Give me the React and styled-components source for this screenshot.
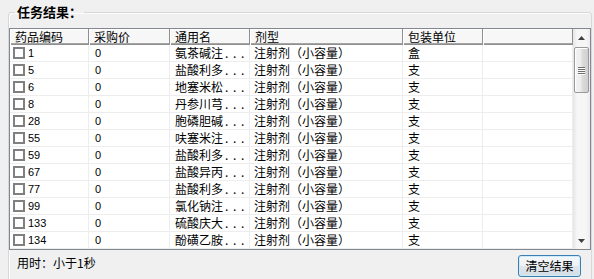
import React from "react";
import styled, { createGlobalStyle } from "styled-components";

const Global = createGlobalStyle`
  html, body { margin: 0; padding: 0; background: #f0f0f0; overflow: hidden; }
  body { font-family: "Noto Sans CJK SC", "Liberation Sans", sans-serif; font-size: 12px; color: #000; }
  * { box-sizing: border-box; }
`;

const Page = styled.div`
  width: 594px;
  height: 279px;
  overflow: hidden;
  padding: 4px 2px 0 8px;
`;

const Group = styled.fieldset`
  margin: 0;
  min-width: 0;
  padding: 0 0 10px 0;
  border: 1px solid #d5d9dc;
  border-radius: 3px;
  box-shadow: inset 1px 1px 0 #fcfcfc;
`;

const Title = styled.legend`
  margin-left: 6px;
  padding: 0 2px;
  font-size: 13px;
  font-weight: bold;
  line-height: 16px;
  font-family: "Noto Sans CJK SC", sans-serif;
`;

const Frame = styled.div`
  margin-top: 8px;
  display: flex;
  border: 1px solid #828790;
  background: #fff;
  height: 222px;
`;

const Body = styled.div`
  flex: 1;
  display: flex;
  flex-direction: column;
  min-width: 0;
`;

const Cols = "79px 81px 80px 153px 80px 1fr";

const HeaderRow = styled.div`
  display: grid;
  grid-template-columns: ${Cols};
  height: 16px;
  background: #f7f7f7;
  box-shadow: inset 0 -1px 0 #8e8e8e, inset 0 -2px 0 #a5a5a5;
`;

const HeadCell = styled.div`
  padding-left: 5px;
  border-right: 1px solid #8f8f8f;
  box-shadow: inset 1px 1px 0 #ffffff, 1px 0 0 #ffffff;
  height: 16px;
  line-height: 15px;
  font-size: 12px;
  white-space: nowrap;
  overflow: hidden;
`;

const Row = styled.div`
  display: grid;
  grid-template-columns: ${Cols};
  height: 17px;
  border-bottom: 1px solid #ededed;
`;

const Cell = styled.div`
  display: flex;
  align-items: center;
  padding-left: ${(p) => p.$pad ?? 5}px;
  border-right: 1px solid #ededed;
  white-space: nowrap;
  overflow: hidden;
  font-family: ${(p) =>
    p.$num ? '"Liberation Sans", Arial, sans-serif' : '"Noto Sans CJK SC", sans-serif'};
  font-size: ${(p) => (p.$num ? "11px" : "12px")};
  line-height: 16px;
`;

const Check = styled.span`
  width: 12px;
  height: 12px;
  border: 2px solid #808080;
  background: #fff;
  margin-right: 3px;
  flex: none;
`;

const Dots = styled.span`
  letter-spacing: 4.6px;
  margin-left: 2px;
`;

const Scroll = styled.div`
  width: 17px;
  flex: none;
  display: flex;
  flex-direction: column;
  background: linear-gradient(to right, #e6e6e6, #f6f6f6 25%, #f6f6f6 75%, #ececec);
`;

const Arrow = styled.div`
  height: 17px;
  display: flex;
  align-items: center;
  justify-content: center;
  flex: none;
`;

const Track = styled.div`
  flex: 1;
  padding: 1px 1px 0 1px;
`;

const Thumb = styled.div`
  height: 46px;
  border: 1px solid #999;
  border-radius: 2px;
  background: linear-gradient(to right, #f4f4f4, #ececec 45%, #dcdcdc 55%, #cfcfcf);
  box-shadow: inset 1px 1px 0 #fff;
  display: flex;
  flex-direction: column;
  align-items: center;
  justify-content: center;
  gap: 1px;
`;

const Grip = styled.span`
  width: 7px;
  height: 1px;
  background: #6f6f6f;
  box-shadow: 0 1px 0 #fafafa;
`;

const Footer = styled.div`
  display: flex;
  justify-content: space-between;
  align-items: flex-start;
  padding: 5px 10px 0 8px;
  height: 30px;
`;

const Info = styled.span`
  line-height: 16px;
  font-size: 12px;
`;

const Button = styled.button`
  width: 63px;
  height: 22px;
  padding: 0;
  border: 1px solid #3c7fb1;
  border-radius: 3px;
  background: linear-gradient(#f4f8fb 0%, #eef2f5 48%, #dfe6ec 52%, #d6dee5 100%);
  box-shadow: inset 0 0 0 1px #cfeaf9;
  font-family: "Noto Sans CJK SC", sans-serif;
  font-size: 12px;
  line-height: 18px;
  color: #000;
`;

const rows = [
  ["1", "氨茶碱注", "盒"],
  ["5", "盐酸利多", "支"],
  ["6", "地塞米松", "支"],
  ["8", "丹参川芎", "支"],
  ["28", "胞磷胆碱", "支"],
  ["55", "呋塞米注", "支"],
  ["59", "盐酸利多", "支"],
  ["67", "盐酸异丙", "支"],
  ["77", "盐酸利多", "支"],
  ["99", "氯化钠注", "支"],
  ["133", "硫酸庆大", "支"],
  ["134", "酚磺乙胺", "支"],
];

const headers = ["药品编码", "采购价", "通用名", "剂型", "包装单位", ""];

const Up = () => (
  <svg width="7" height="4" viewBox="0 0 7 4">
    <path d="M3.5 0 L7 4 L0 4 Z" fill="#404040" />
  </svg>
);
const Down = () => (
  <svg width="7" height="4" viewBox="0 0 7 4">
    <path d="M0 0 L7 0 L3.5 4 Z" fill="#404040" />
  </svg>
);

export default function App() {
  return (
    <Page>
      <Global />
      <Group>
        <Title>任务结果：</Title>
        <Frame>
          <Body>
            <HeaderRow>
              {headers.map((h, i) => (
                <HeadCell key={i}>{h}</HeadCell>
              ))}
            </HeaderRow>
            {rows.map(([code, name, unit]) => (
              <Row key={code}>
                <Cell $num $pad={3}>
                  <Check />
                  {code}
                </Cell>
                <Cell $num $pad={6}>0</Cell>
                <Cell $pad={5}>
                  {name}
                  <Dots>...</Dots>
                </Cell>
                <Cell $pad={4}>注射剂（小容量）</Cell>
                <Cell $pad={5}>{unit}</Cell>
                <Cell />
              </Row>
            ))}
          </Body>
          <Scroll>
            <Arrow><Up /></Arrow>
            <Track>
              <Thumb>
                <Grip />
                <Grip />
                <Grip />
                <Grip />
              </Thumb>
            </Track>
            <Arrow><Down /></Arrow>
          </Scroll>
        </Frame>
        <Footer>
          <Info>用时：小于1秒</Info>
          <Button>清空结果</Button>
        </Footer>
      </Group>
    </Page>
  );
}
